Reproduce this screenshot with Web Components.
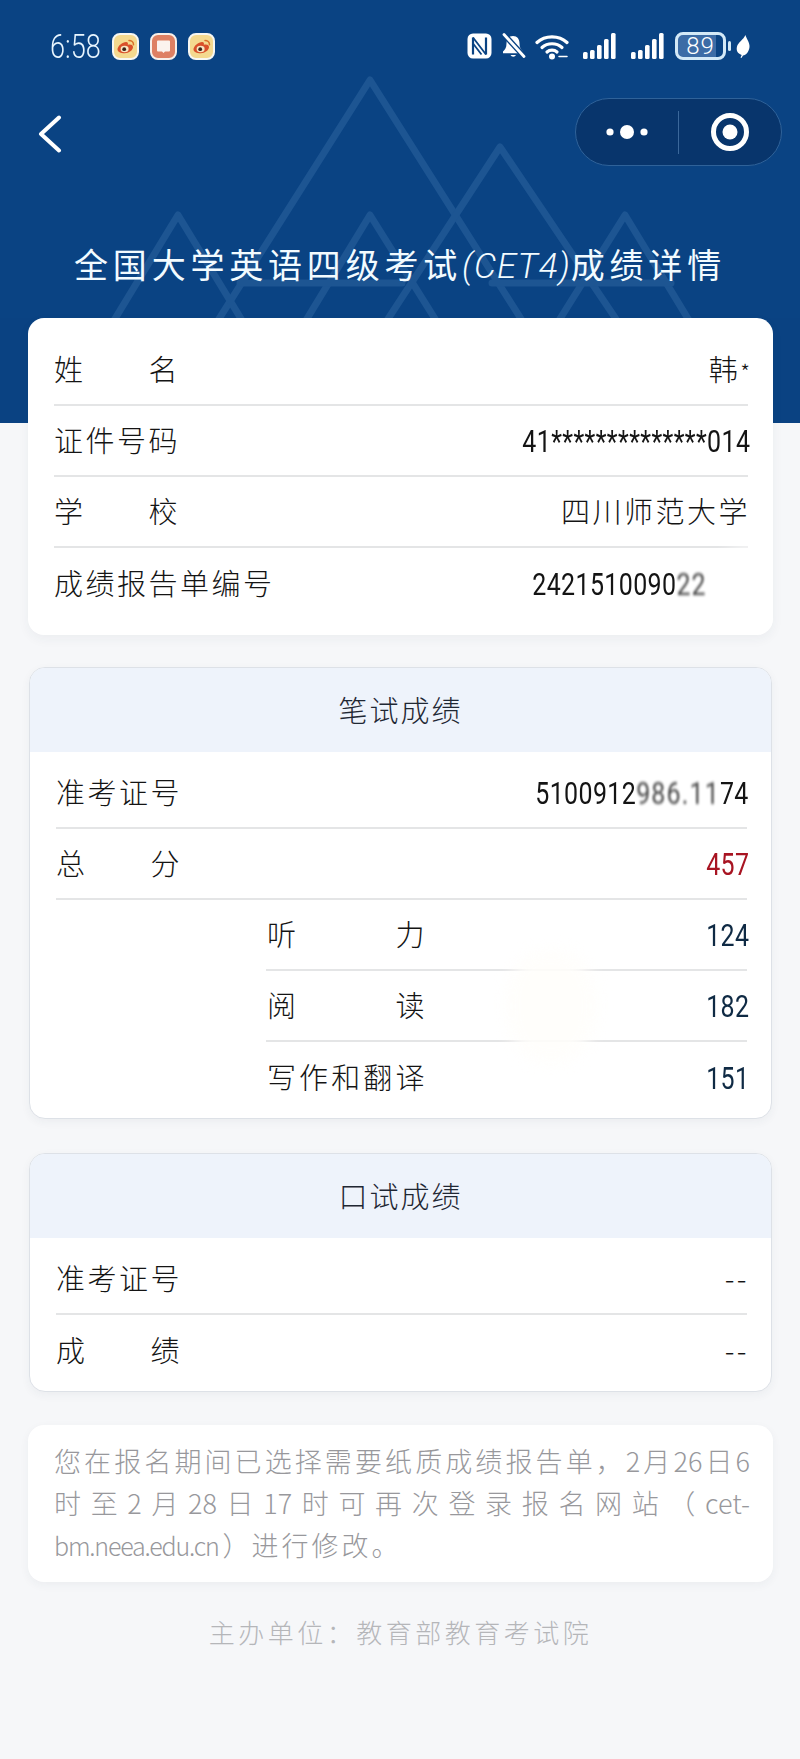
<!DOCTYPE html>
<html lang="zh-CN">
<head>
<meta charset="utf-8">
<title>CET4</title>
<style>
  html, body { margin: 0; padding: 0; }
  body {
    width: 800px;
    min-height: 1759px;
    background: #f6f7f9;
    font-family: "Noto Sans CJK SC", "Noto Sans", sans-serif;
    font-weight: 300;
    overflow-x: hidden;
  }
</style>
</head>
<body>

<cet-header>
  <cet-status slot="status"></cet-status>
  <cet-capsule slot="nav"></cet-capsule>
  全国大学英语四级考试<span style="letter-spacing:1px;font-style:italic;font-family:Roboto,sans-serif;font-size:35px;font-weight:300">(CET4)</span>成绩详情
</cet-header>

<cet-main>
  <cet-card>
    <cet-row><span slot="label">姓名</span>韩<span style="font-size:22px;letter-spacing:0">*</span></cet-row>
    <cet-row><span slot="label">证件号码</span><cet-num>41**************014</cet-num></cet-row>
    <cet-row><span slot="label">学校</span>四川师范大学</cet-row>
    <cet-row last><span slot="label">成绩报告单编号</span><cet-num style="margin-right:43px">2421510090<cet-blur>22</cet-blur></cet-num></cet-row>
    <cet-smudge style="left:690px;top:228px;width:60px;height:80px"></cet-smudge>
  </cet-card>

  <cet-section heading="笔试成绩">
    <cet-row><span slot="label">准考证号</span><cet-num>5100912<cet-blur>986.11</cet-blur>74</cet-num></cet-row>
    <cet-row><span slot="label">总分</span><cet-num style="color:#a81422">457</cet-num></cet-row>
    <cet-row sub><span slot="label">听力</span><cet-num style="color:#0f2a44">124</cet-num></cet-row>
    <cet-row sub><span slot="label">阅读</span><cet-num style="color:#0f2a44">182</cet-num></cet-row>
    <cet-row sub last><span slot="label">写作和翻译</span><cet-num style="color:#0f2a44">151</cet-num></cet-row>
    <cet-smudge style="left:476px;top:282px;width:90px;height:112px;--smudge:#fffefb"></cet-smudge>
  </cet-section>

  <cet-section heading="口试成绩" style="margin-top:34px">
    <cet-row><span slot="label">准考证号</span>--</cet-row>
    <cet-row last><span slot="label">成绩</span>--</cet-row>
  </cet-section>

  <cet-note>
    <span>您在报名期间已选择需要纸质成绩报告单，2月26日6</span>
    <span>时至2月28日17时可再次登录报名网站（cet-</span>
    <span last><span style="font-size:25px;letter-spacing:-1.200px">bm.neea.edu.cn</span><span style="margin:0 2px 0 4px">）</span><span style="letter-spacing:3px">进行修改。</span></span>
  </cet-note>

  <cet-footer>主办单位：教育部教育考试院</cet-footer>
</cet-main>

<script>
// header with the mountain lines behind it
class CetHeader extends HTMLElement {
  constructor() {
    super();
    const shadow = this.attachShadow({ mode: 'open' });
    shadow.innerHTML = `
      <style>
        :host {
          display: block;
          position: relative;
          height: 318px;
          overflow: hidden;
          background: #0a4383;
          color: #f2fbff;
        }
        svg.bg { position: absolute; left: 0; top: 0; }
        .inner { position: relative; display: flex; flex-direction: column; }
        .title {
          margin-top: 72px;
          height: 52px;
          line-height: 52px;
          text-align: center;
          font-size: 34px;
          font-weight: 400;
          letter-spacing: 4.800px;
          white-space: nowrap;
        }
      </style>
      <svg class="bg" width="800" height="318" fill="none" stroke="#1d5592" stroke-width="7" stroke-linejoin="round" stroke-linecap="round">
        <path d="M217 322 L370 80 L523 322"/>
        <path d="M386 322 L500 147 L618 322"/>
        <path d="M113 322 L178 215 L243 322"/>
        <path d="M305 322 L370 215 L437 322"/>
        <path d="M558 322 L625 215 L690 322"/>
        <path d="M240 283 H402"/>
        <path d="M492 283 H671"/>
      </svg>
      <div class="inner">
        <slot name="status"></slot>
        <slot name="nav"></slot>
        <div class="title"><slot></slot></div>
      </div>`;
  }
}
customElements.define('cet-header', CetHeader);

class CetStatus extends HTMLElement {
  constructor() {
    super();
    const shadow = this.attachShadow({ mode: 'open' });
    const weibo = `
      <svg width="27" height="27" viewBox="0 0 27 27">
        <rect x="1" y="1" width="25" height="25" rx="7" fill="#f4d98f" stroke="#f7f7f2" stroke-width="2"/>
        <path d="M5.500 16.500c0-3.600 5-7.600 8.600-7.600 1.700 0 2.200 1.200 1.700 2.800 2.200-.7 5.200-.4 5.200 2.400 0 3.300-4.200 6.200-8.300 6.200-4 0-7.200-1.600-7.200-3.800z" fill="#d9502a"/>
        <ellipse cx="12.600" cy="16" rx="4" ry="3.200" fill="#f7e6c2"/>
        <circle cx="12.200" cy="16.200" r="1.900" fill="#3a2218"/>
        <path d="M17 7.500c2.500 0 4.500 1.700 4.500 4.200" fill="none" stroke="#d9702a" stroke-width="1.500" stroke-linecap="round"/>
      </svg>`;
    const signal = `
      <svg width="33" height="27" viewBox="0 0 33 27" fill="#fff">
        <rect x="0" y="19" width="4.600" height="7" rx="1.500"/>
        <rect x="7" y="17" width="4.600" height="9" rx="1.500"/>
        <rect x="14" y="12" width="4.600" height="14" rx="1.500"/>
        <rect x="21" y="6" width="4.600" height="20" rx="1.500"/>
        <rect x="28" y="0" width="4.600" height="26" rx="1.500"/>
      </svg>`;
    shadow.innerHTML = `
      <style>
        :host {
          display: flex;
          align-items: center;
          height: 92px;
          padding: 0 50px 0 50px;
          box-sizing: border-box;
          color: #e9f6ff;
        }
        .time {
          font: 300 33px/1 Roboto, sans-serif;
          width: 62px;
          transform: scaleX(.82);
          transform-origin: left center;
          white-space: nowrap;
        }
        .apps { display: flex; gap: 11px; }
        .spacer { flex: 1; }
        .icons { display: flex; align-items: center; }
        svg { display: block; }
        .battery {
          box-sizing: border-box;
          width: 51px;
          height: 28px;
          margin-left: 11px;
          border: 3px solid #d3e9f7;
          border-radius: 8px;
          background: linear-gradient(90deg, #3c6ca6 84%, #0a4383 84%);
          font: 300 24px/22px Roboto, sans-serif;
          text-align: center;
          letter-spacing: 1px;
          color: #fff;
        }
      </style>
      <div class="time">6:58</div>
      <div class="apps">
        ${weibo}
        <svg width="27" height="27" viewBox="0 0 27 27">
          <rect x="1" y="1" width="25" height="25" rx="7" fill="#de8063" stroke="#f7efe9" stroke-width="2"/>
          <path d="M8 7.500h11a1 1 0 0 1 1 1v9a1 1 0 0 1-1 1h-4l-1.500 1.500-1.500-1.500h-4a1 1 0 0 1-1-1v-9a1 1 0 0 1 1-1z" fill="#fbf3ee"/>
        </svg>
        ${weibo}
      </div>
      <div class="spacer"></div>
      <div class="icons">
        <svg width="25" height="26" viewBox="0 0 25 26">
          <rect x="0.500" y="0.500" width="24" height="25" rx="5.500" fill="#fff"/>
          <path d="M6 4.500v17M19 4.500v17" stroke="#0a4383" stroke-width="2.200" fill="none"/>
          <path d="M6 4.500l13 17M6 10.500l8.500 11" stroke="#0a4383" stroke-width="1.800" fill="none"/>
        </svg>
        <svg style="margin-left:9px" width="25" height="27" viewBox="0 0 25 27">
          <path d="M12 3c-4.300 0-6.500 3.200-6.500 7.200 0 4.400-1.300 6.400-3.500 8.300v1.700h20v-1.700c-2.200-1.900-3.500-3.900-3.500-8.300C18.500 6.200 16.300 3 12 3z" fill="#fff"/>
          <path d="M9.500 22a3 3 0 0 0 5.500 0z" fill="#fff"/>
          <path d="M3 1.500l20 22" stroke="#0a4383" stroke-width="5.500"/>
          <path d="M3 1.500l20 22" stroke="#fff" stroke-width="2.800" stroke-linecap="round"/>
        </svg>
        <svg style="margin-left:9px" width="35" height="27" viewBox="0 0 35 27" fill="none" stroke="#fff" stroke-width="3.200" stroke-linecap="round">
          <path d="M2 9.500C10 2 24 2 32 9.500"/>
          <path d="M7 14.500c5.500-5 14.500-5 20 0"/>
          <path d="M12 19c2.800-2.500 7.200-2.500 10 0"/>
          <circle cx="17" cy="23.500" r="3" fill="#fff" stroke="none"/>
          <path d="M24 23.500h8" stroke-width="1.500"/>
        </svg>
        <span style="margin-left:13px">${signal}</span>
        <span style="margin-left:15px">${signal}</span>
        <div class="battery">89</div>
        <div style="width:3px;height:10px;margin-left:2px;background:#d3e9f7;border-radius:2px"></div>
        <svg style="margin-left:5px" width="14" height="23" viewBox="0 0 14 23">
          <path d="M9.500 0C10 3 14 7.500 13.500 12c-.5 5-3.500 8-6.500 8.500L5.500 23l-1-.5 1.200-2.500C1.500 18.500 0 15.500 1 11.500 2 7.500 7.500 4.500 9.500 0z" fill="#fff"/>
        </svg>
      </div>`;
  }
}
customElements.define('cet-status', CetStatus);

// back arrow on the left, wechat capsule on the right
class CetCapsule extends HTMLElement {
  constructor() {
    super();
    const shadow = this.attachShadow({ mode: 'open' });
    shadow.innerHTML = `
      <style>
        :host {
          display: flex;
          align-items: center;
          justify-content: space-between;
          height: 68px;
          margin-top: 6px;
          padding: 0 18px 0 38px;
        }
        .pill {
          display: flex;
          align-items: center;
          box-sizing: border-box;
          width: 207px;
          height: 68px;
          border: 1.500px solid #2f6299;
          border-radius: 34px;
          background: #08356c;
        }
        .part { flex: 1; display: flex; align-items: center; justify-content: center; }
        .line { width: 1px; height: 43px; background: #3b689b; }
        svg { display: block; }
        .back { margin-top: 3px; }
      </style>
      <svg class="back" width="24" height="38" viewBox="0 0 24 38" fill="none" stroke="#fff" stroke-width="4" stroke-linecap="round" stroke-linejoin="round">
        <path d="M21 2.500 L3 19 L21 35.500"/>
      </svg>
      <div class="pill">
        <div class="part">
          <svg width="44" height="16" viewBox="0 0 44 16" fill="#fff">
            <circle cx="5" cy="8" r="3.600"/><circle cx="22" cy="8" r="7"/><circle cx="39" cy="8" r="3.600"/>
          </svg>
        </div>
        <div class="line"></div>
        <div class="part">
          <svg width="40" height="40" viewBox="0 0 40 40">
            <circle cx="20" cy="20" r="16.500" fill="none" stroke="#fff" stroke-width="5"/>
            <circle cx="20" cy="20" r="7.500" fill="#fff"/>
          </svg>
        </div>
      </div>`;
  }
}
customElements.define('cet-capsule', CetCapsule);

class CetMain extends HTMLElement {
  constructor() {
    super();
    const shadow = this.attachShadow({ mode: 'open' });
    shadow.innerHTML = `
      <style>
        :host {
          display: flex;
          flex-direction: column;
          padding: 0 27px 0 28px;
          background: linear-gradient(#0a4282 105px, #f6f7f9 105px);
        }
      </style>
      <slot></slot>`;
  }
}
customElements.define('cet-main', CetMain);

class CetCard extends HTMLElement {
  constructor() {
    super();
    const shadow = this.attachShadow({ mode: 'open' });
    shadow.innerHTML = `
      <style>
        :host {
          display: block;
          position: relative;
          overflow: hidden;
          padding: 17px 25px 16px 26px;
          border-radius: 16px;
          background: #fff;
          box-shadow: 0 4px 12px rgba(40, 50, 70, .05);
        }
      </style>
      <slot></slot>`;
  }
}
customElements.define('cet-card', CetCard);

class CetSection extends HTMLElement {
  constructor() {
    super();
    const shadow = this.attachShadow({ mode: 'open' });
    shadow.innerHTML = `
      <style>
        :host {
          display: block;
          position: relative;
          overflow: hidden;
          box-sizing: border-box;
          margin: 32px 1px 0 1px;
          border: 1px solid #dde1e7;
          border-radius: 16px;
          background: #fff;
          box-shadow: 0 3px 10px rgba(40, 50, 70, .05);
        }
        .head {
          height: 84px;
          line-height: 82px;
          text-align: center;
          font-size: 29px;
          letter-spacing: 2px;
          color: #1f2733;
          background: #eef3fb;
        }
        .body { padding: 6px 24px 5px 26px; }
      </style>
      <div class="head"></div>
      <div class="body"><slot></slot></div>`;
    shadow.querySelector('.head').textContent = this.getAttribute('heading') || '';
  }
}
customElements.define('cet-section', CetSection);

class CetRow extends HTMLElement {
  constructor() {
    super();
    const shadow = this.attachShadow({ mode: 'open' });
    shadow.innerHTML = `
      <style>
        :host {
          display: flex;
          align-items: center;
          justify-content: space-between;
          box-sizing: border-box;
          height: 71px;
          padding-bottom: 3px;
          border-bottom: 2px solid #e4e5e6;
          font-size: 29px;
          letter-spacing: 2.500px;
          color: #141414;
        }
        :host([last]) { border-bottom: 0; }
        :host([sub]) { margin-left: 210px; }
        .label { flex-shrink: 0; min-width: 126px; text-align-last: justify; }
        :host([sub]) .label { min-width: 160px; padding-left: 1px; }
        .value { margin-right: -2px; white-space: nowrap; text-align: right; }
      </style>
      <div class="label"><slot name="label"></slot></div>
      <div class="value"><slot></slot></div>`;
  }
}
customElements.define('cet-row', CetRow);

// the digits in the reference are narrow and tall
class CetNum extends HTMLElement {
  constructor() {
    super();
    const shadow = this.attachShadow({ mode: 'open' });
    shadow.innerHTML = `
      <style>
        :host {
          display: inline-block;
          font: 400 32px/1 Roboto, sans-serif;
          letter-spacing: .5px;
          white-space: nowrap;
          transform: scaleX(.78);
          transform-origin: right center;
        }
      </style>
      <slot></slot>`;
  }
}
customElements.define('cet-num', CetNum);

class CetBlur extends HTMLElement {
  constructor() {
    super();
    const shadow = this.attachShadow({ mode: 'open' });
    shadow.innerHTML = `
      <style>
        :host { display: inline-block; filter: blur(1.500px); letter-spacing: 1.500px; opacity: .8; }
      </style>
      <slot></slot>`;
  }
}
customElements.define('cet-blur', CetBlur);

// soft white patches lying over the photo
class CetSmudge extends HTMLElement {
  constructor() {
    super();
    const shadow = this.attachShadow({ mode: 'open' });
    shadow.innerHTML = `
      <style>
        :host {
          display: block;
          position: absolute;
          border-radius: 45%;
          background: var(--smudge, #fff);
          filter: blur(8px);
          opacity: .9;
          pointer-events: none;
        }
      </style>`;
  }
}
customElements.define('cet-smudge', CetSmudge);

class CetNote extends HTMLElement {
  constructor() {
    super();
    const shadow = this.attachShadow({ mode: 'open' });
    shadow.innerHTML = `
      <style>
        :host {
          display: block;
          margin-top: 33px;
          padding: 15px 23px 16px 26px;
          border-radius: 16px;
          background: #fff;
          box-shadow: 0 3px 10px rgba(40, 50, 70, .05);
          font-size: 27px;
          line-height: 42px;
          color: #98989c;
        }
        ::slotted(span) { display: block; text-align-last: justify; }
        ::slotted(span[last]) { text-align-last: left; }
      </style>
      <slot></slot>`;
  }
}
customElements.define('cet-note', CetNote);

class CetFooter extends HTMLElement {
  constructor() {
    super();
    const shadow = this.attachShadow({ mode: 'open' });
    shadow.innerHTML = `
      <style>
        :host {
          display: block;
          margin-top: 28px;
          text-align: center;
          font-size: 26px;
          line-height: 44px;
          letter-spacing: 3.500px;
          color: #b5b6b9;
        }
      </style>
      <slot></slot>`;
  }
}
customElements.define('cet-footer', CetFooter);
</script>
</body>
</html>
